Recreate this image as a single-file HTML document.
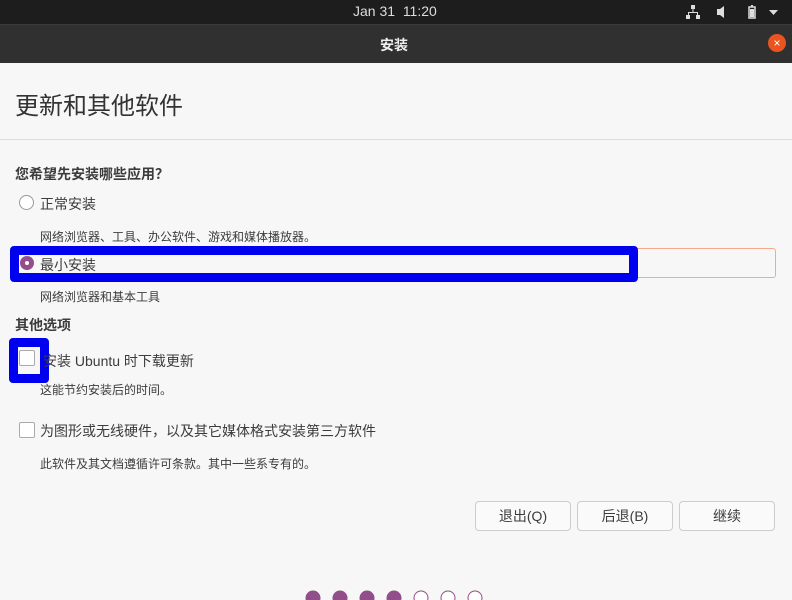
<!DOCTYPE html><html><head><meta charset="utf-8"><style>
body{margin:0;width:792px;height:600px;overflow:hidden;background:#f7f7f7;font-family:"Liberation Sans","Noto Sans CJK SC",sans-serif;position:relative;color:#3c3c3c}
.a{position:absolute;white-space:nowrap}
</style></head><body>
<div class="a" style="left:0;top:0;width:792px;height:24px;background:#1d1d1d"></div>
<div class="a" style="left:0;top:24px;width:792px;height:38px;background:#303030;border-top:1px solid #3a3a3a"></div>
<div class="a" style="left:353px;top:3px;color:#ddd;font-size:14px">Jan 31&nbsp; 11:20</div>
<svg class="a" style="left:686px;top:4px" width="100" height="16"><g fill="#ddd"><rect x="5" y="1" width="4" height="4"/><rect x="6.5" y="5" width="1" height="3"/><rect x="2" y="8" width="10" height="1"/><rect x="2" y="8" width="1" height="3"/><rect x="11" y="8" width="1" height="3"/><rect x="0" y="11" width="4" height="4"/><rect x="10" y="11" width="4" height="4"/><path d="M31 5h3l4-3v12l-4-3h-3z"/><rect x="63" y="3" width="6" height="11" fill="none" stroke="#ddd" stroke-width="1.5"/><rect x="65" y="1" width="2" height="2"/><rect x="64" y="5" width="4" height="8"/><path d="M83 6h9l-4.5 5z"/></g></svg>
<div class="a" style="left:380px;top:35px;color:#eee;font-size:14px;font-weight:bold">安装</div>
<div class="a" style="left:768px;top:34px;width:18px;height:18px;border-radius:50%;background:#e95420;color:#fff;font-size:12px;text-align:center;line-height:18px">×</div>
<div class="a" style="left:15px;top:86px;font-size:24px;color:#333">更新和其他软件</div>
<div class="a" style="left:0;top:139px;width:792px;height:1px;background:#ddd"></div>
<div class="a" style="left:15px;top:164px;font-size:14px;font-weight:bold">您希望先安装哪些应用？</div>
<div class="a" style="left:19px;top:195px;width:13px;height:13px;border:1px solid #999;border-radius:50%;background:#fff"></div>
<div class="a" style="left:40px;top:194px;font-size:14px">正常安装</div>
<div class="a" style="left:40px;top:228px;font-size:12px">网络浏览器、工具、办公软件、游戏和媒体播放器。</div>
<div class="a" style="left:12px;top:248px;width:762px;height:28px;border:1.5px solid #f3a98b;border-radius:3px"></div>
<div class="a" style="left:10px;top:246px;width:610px;height:18px;border:9px solid #0000f0;border-radius:4px;background:#f7f7f7"></div>
<div class="a" style="left:20px;top:256px;width:14px;height:14px;border-radius:50%;background:#924d8b"></div>
<div class="a" style="left:25px;top:261px;width:4px;height:4px;border-radius:50%;background:#fff"></div>
<div class="a" style="left:40px;top:255px;font-size:14px">最小安装</div>
<div class="a" style="left:40px;top:288px;font-size:12px">网络浏览器和基本工具</div>
<div class="a" style="left:15px;top:315px;font-size:14px;font-weight:bold">其他选项</div>
<div class="a" style="left:9px;top:338px;width:22px;height:27px;border:9px solid #0000f0;border-radius:4px;background:#f7f7f7"></div>
<div class="a" style="left:19px;top:350px;width:14px;height:14px;border:1px solid #aaa;border-radius:2px;background:#fff"></div>
<div class="a" style="left:43px;top:351px;font-size:14px">安装 Ubuntu 时下载更新</div>
<div class="a" style="left:40px;top:381px;font-size:12px">这能节约安装后的时间。</div>
<div class="a" style="left:19px;top:422px;width:14px;height:14px;border:1px solid #aaa;border-radius:2px;background:#fff"></div>
<div class="a" style="left:40px;top:421px;font-size:14px">为图形或无线硬件，以及其它媒体格式安装第三方软件</div>
<div class="a" style="left:40px;top:455px;font-size:12px">此软件及其文档遵循许可条款。其中一些系专有的。</div>
<div class="a" style="left:475px;top:501px;width:94px;height:28px;border:1px solid #ccc;border-radius:4px;background:#fafafa;text-align:center;line-height:28px;font-size:14px">退出(Q)</div>
<div class="a" style="left:577px;top:501px;width:94px;height:28px;border:1px solid #ccc;border-radius:4px;background:#fafafa;text-align:center;line-height:28px;font-size:14px">后退(B)</div>
<div class="a" style="left:679px;top:501px;width:94px;height:28px;border:1px solid #ccc;border-radius:4px;background:#fafafa;text-align:center;line-height:28px;font-size:14px">继续</div>
<svg class="a" style="left:300px;top:585px" width="200" height="15"><g fill="#924d8b"><circle cx="13" cy="13" r="7.5"/><circle cx="40" cy="13" r="7.5"/><circle cx="67" cy="13" r="7.5"/><circle cx="94" cy="13" r="7.5"/></g><g fill="#fff" stroke="#924d8b" stroke-width="1"><circle cx="121" cy="13" r="7"/><circle cx="148" cy="13" r="7"/><circle cx="175" cy="13" r="7"/></g></svg>
</body></html>
